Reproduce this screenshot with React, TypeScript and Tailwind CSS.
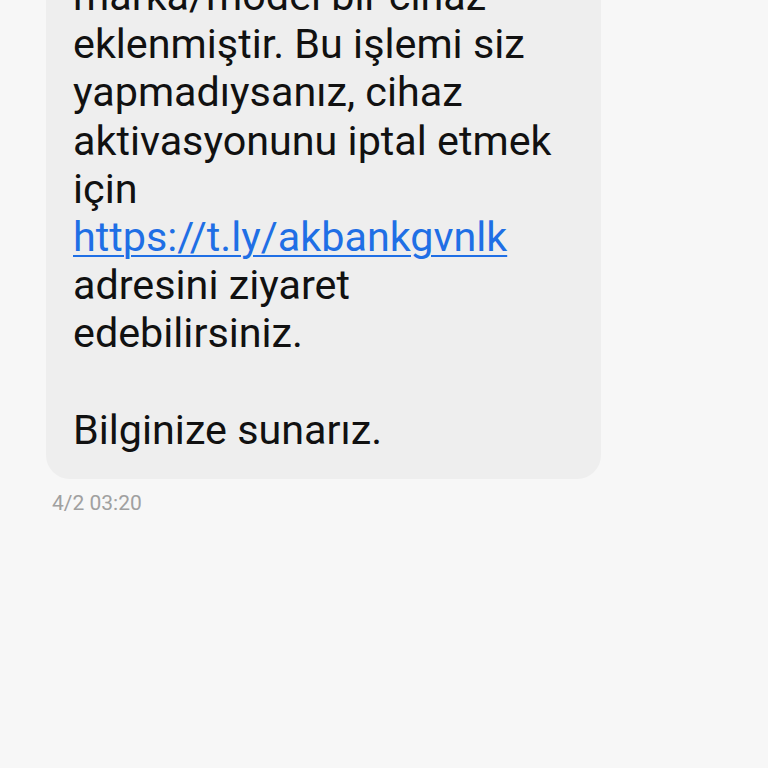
export default function App() {
  const lines = [
    "marka/model bir cihaz",
    "eklenmiştir. Bu işlemi siz",
    "yapmadıysanız, cihaz",
    "aktivasyonunu iptal etmek",
    "için",
  ];

  return (
    <div
      className="w-[768px] h-[768px] overflow-hidden bg-[#f7f7f7]"
      style={{ fontFamily: "Roboto, 'Noto Sans', sans-serif" }}
    >
      <div className="pl-[46px] -mt-[56px]">
        <div className="w-[555px] bg-[#eeeeee] rounded-[24px] pl-[27px] pr-[20px] pt-[28px] pb-[25px] text-[41.3px] leading-[48.2px] text-[#111111] whitespace-nowrap">
          {lines.map((l) => (
            <div key={l}>{l}</div>
          ))}
          <div>
            <a className="text-[#1f6fe5] underline decoration-[2px] underline-offset-[4px]">
              https://t.ly/akbankgvnlk
            </a>
          </div>
          <div>adresini ziyaret</div>
          <div>edebilirsiniz.</div>
          <div className="h-[48px]"></div>
          <div>Bilginize sunarız.</div>
        </div>
        <div className="mt-[12px] ml-[6px] text-[21px] leading-[24px] text-[#a0a0a0]">
          4/2 03:20
        </div>
      </div>
    </div>
  );
}
